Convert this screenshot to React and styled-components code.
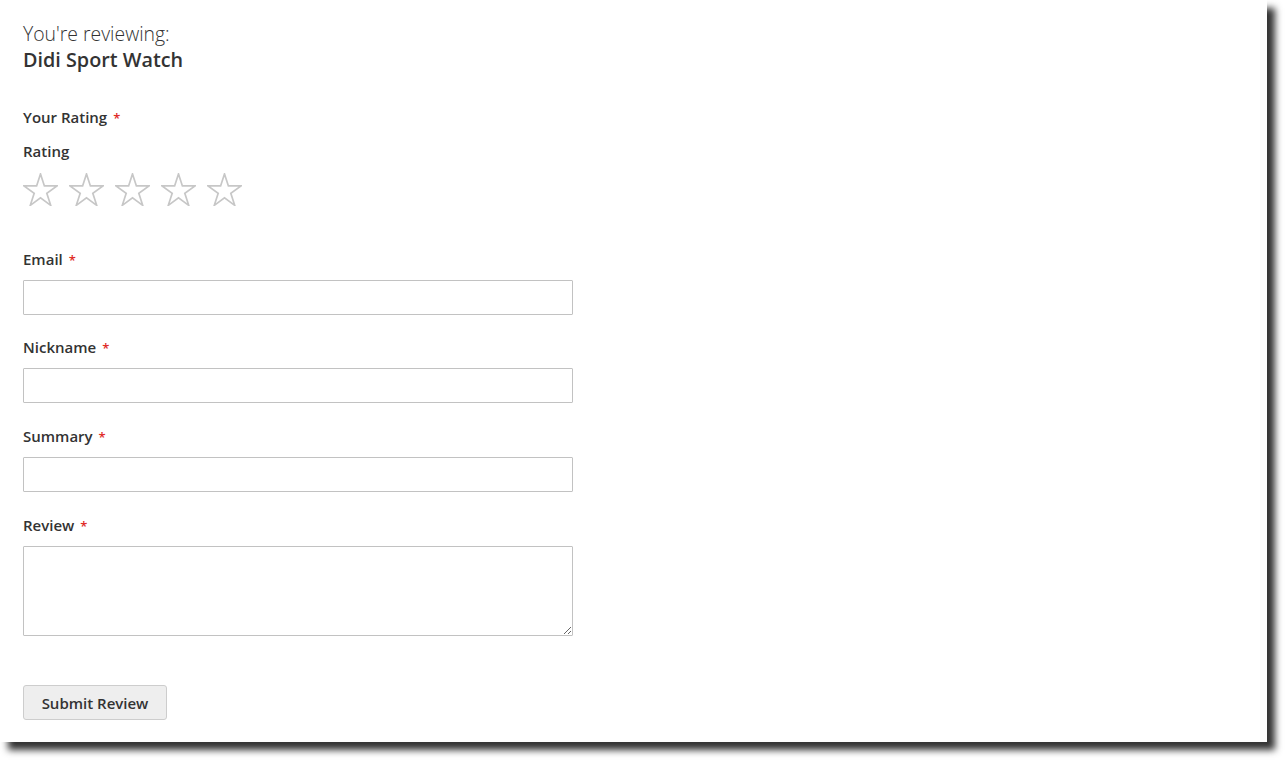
import styled, { createGlobalStyle } from "styled-components";

const GlobalStyle = createGlobalStyle`
  html, body {
    margin: 0;
    padding: 0;
    background: #fff;
  }
  body {
    font-family: "Open Sans", "Liberation Sans", sans-serif;
    color: #333;
  }
`;

const Frame = styled.div`
  padding: 0 18px 18px 0;
  min-height: 760px;
  box-sizing: border-box;
`;

const Page = styled.div`
  width: 1267px;
  height: 742px;
  background: #fff;
  box-shadow: 8px 8px 7px rgba(0, 0, 0, 0.8);
  box-sizing: border-box;
  padding: 21px 23px 0;
`;

const Legend = styled.div`
  font-size: 20px;
  line-height: 26px;
  margin-bottom: 34px;
`;

const Reviewing = styled.span`
  display: block;
  font-weight: 300;
  font-size: 19.4px;
`;

const Product = styled.strong`
  display: block;
  font-weight: 600;
  font-size: 19.8px;
`;

const Form = styled.form`
  display: flex;
  flex-direction: column;
  width: 550px;
`;

const Label = styled.label`
  display: block;
  font-size: 15px;
  font-weight: 600;
  line-height: 20px;
  margin-bottom: ${(p) => p.$mb ?? 10}px;

  ${(p) =>
    p.$required &&
    `
    &::after {
      content: "*";
      color: #e02b27;
      margin-left: 6px;
      font-size: 13px;
    }
  `}
`;

const Stars = styled.div`
  display: flex;
  gap: 11px;
  margin-bottom: 43px;
`;

const Field = styled.div`
  margin-bottom: ${(p) => p.$mb ?? 23}px;
`;

const Input = styled.input`
  display: block;
  width: 100%;
  height: 35px;
  box-sizing: border-box;
  border: 1px solid #c2c2c2;
  border-radius: 1px;
  background: #fff;
  padding: 0 9px;
  font: 14px "Open Sans", sans-serif;
  outline: none;
`;

const Textarea = styled.textarea`
  display: block;
  width: 100%;
  height: 90px;
  box-sizing: border-box;
  border: 1px solid #c2c2c2;
  border-radius: 1px;
  background: #fff;
  padding: 9px;
  font: 14px "Open Sans", sans-serif;
  outline: none;
  resize: vertical;
`;

const Button = styled.button`
  align-self: flex-start;
  height: 35px;
  width: 144px;
  box-sizing: border-box;
  background: #eee;
  border: 1px solid #cdcdcd;
  border-radius: 3px;
  color: #333;
  font-family: "Open Sans", sans-serif;
  font-size: 15px;
  font-weight: 600;
  padding: 0;
  cursor: pointer;
`;

const Star = () => (
  <svg width="35" height="33" viewBox="-1 -1 37 35">
    <polygon
      points="17.5,0 21.63,12.71 35,12.71 24.19,20.57 28.32,33.29 17.5,25.43 6.68,33.29 10.81,20.57 0,12.71 13.37,12.71"
      fill="none"
      stroke="#c7c7c7"
      strokeWidth="1.8"
      strokeLinejoin="miter"
    />
  </svg>
);

export default function App() {
  const fields = [
    { label: "Email", type: "email", mb: 22 },
    { label: "Nickname", type: "text" },
    { label: "Summary", type: "text" },
  ];

  return (
    <Frame>
      <GlobalStyle />
      <Page>
        <Legend>
          <Reviewing>You're reviewing:</Reviewing>
          <Product>Didi Sport Watch</Product>
        </Legend>
        <Form onSubmit={(e) => e.preventDefault()}>
          <Label $required $mb={13}>
            Your Rating
          </Label>
          <Label $mb={12}>Rating</Label>
          <Stars>
            {[1, 2, 3, 4, 5].map((n) => (
              <Star key={n} />
            ))}
          </Stars>
          {fields.map((f) => (
            <Field key={f.label} $mb={f.mb}>
              <Label $required>{f.label}</Label>
              <Input type={f.type} />
            </Field>
          ))}
          <Field $mb={49}>
            <Label $required>Review</Label>
            <Textarea />
          </Field>
          <Button type="submit">Submit Review</Button>
        </Form>
      </Page>
    </Frame>
  );
}
